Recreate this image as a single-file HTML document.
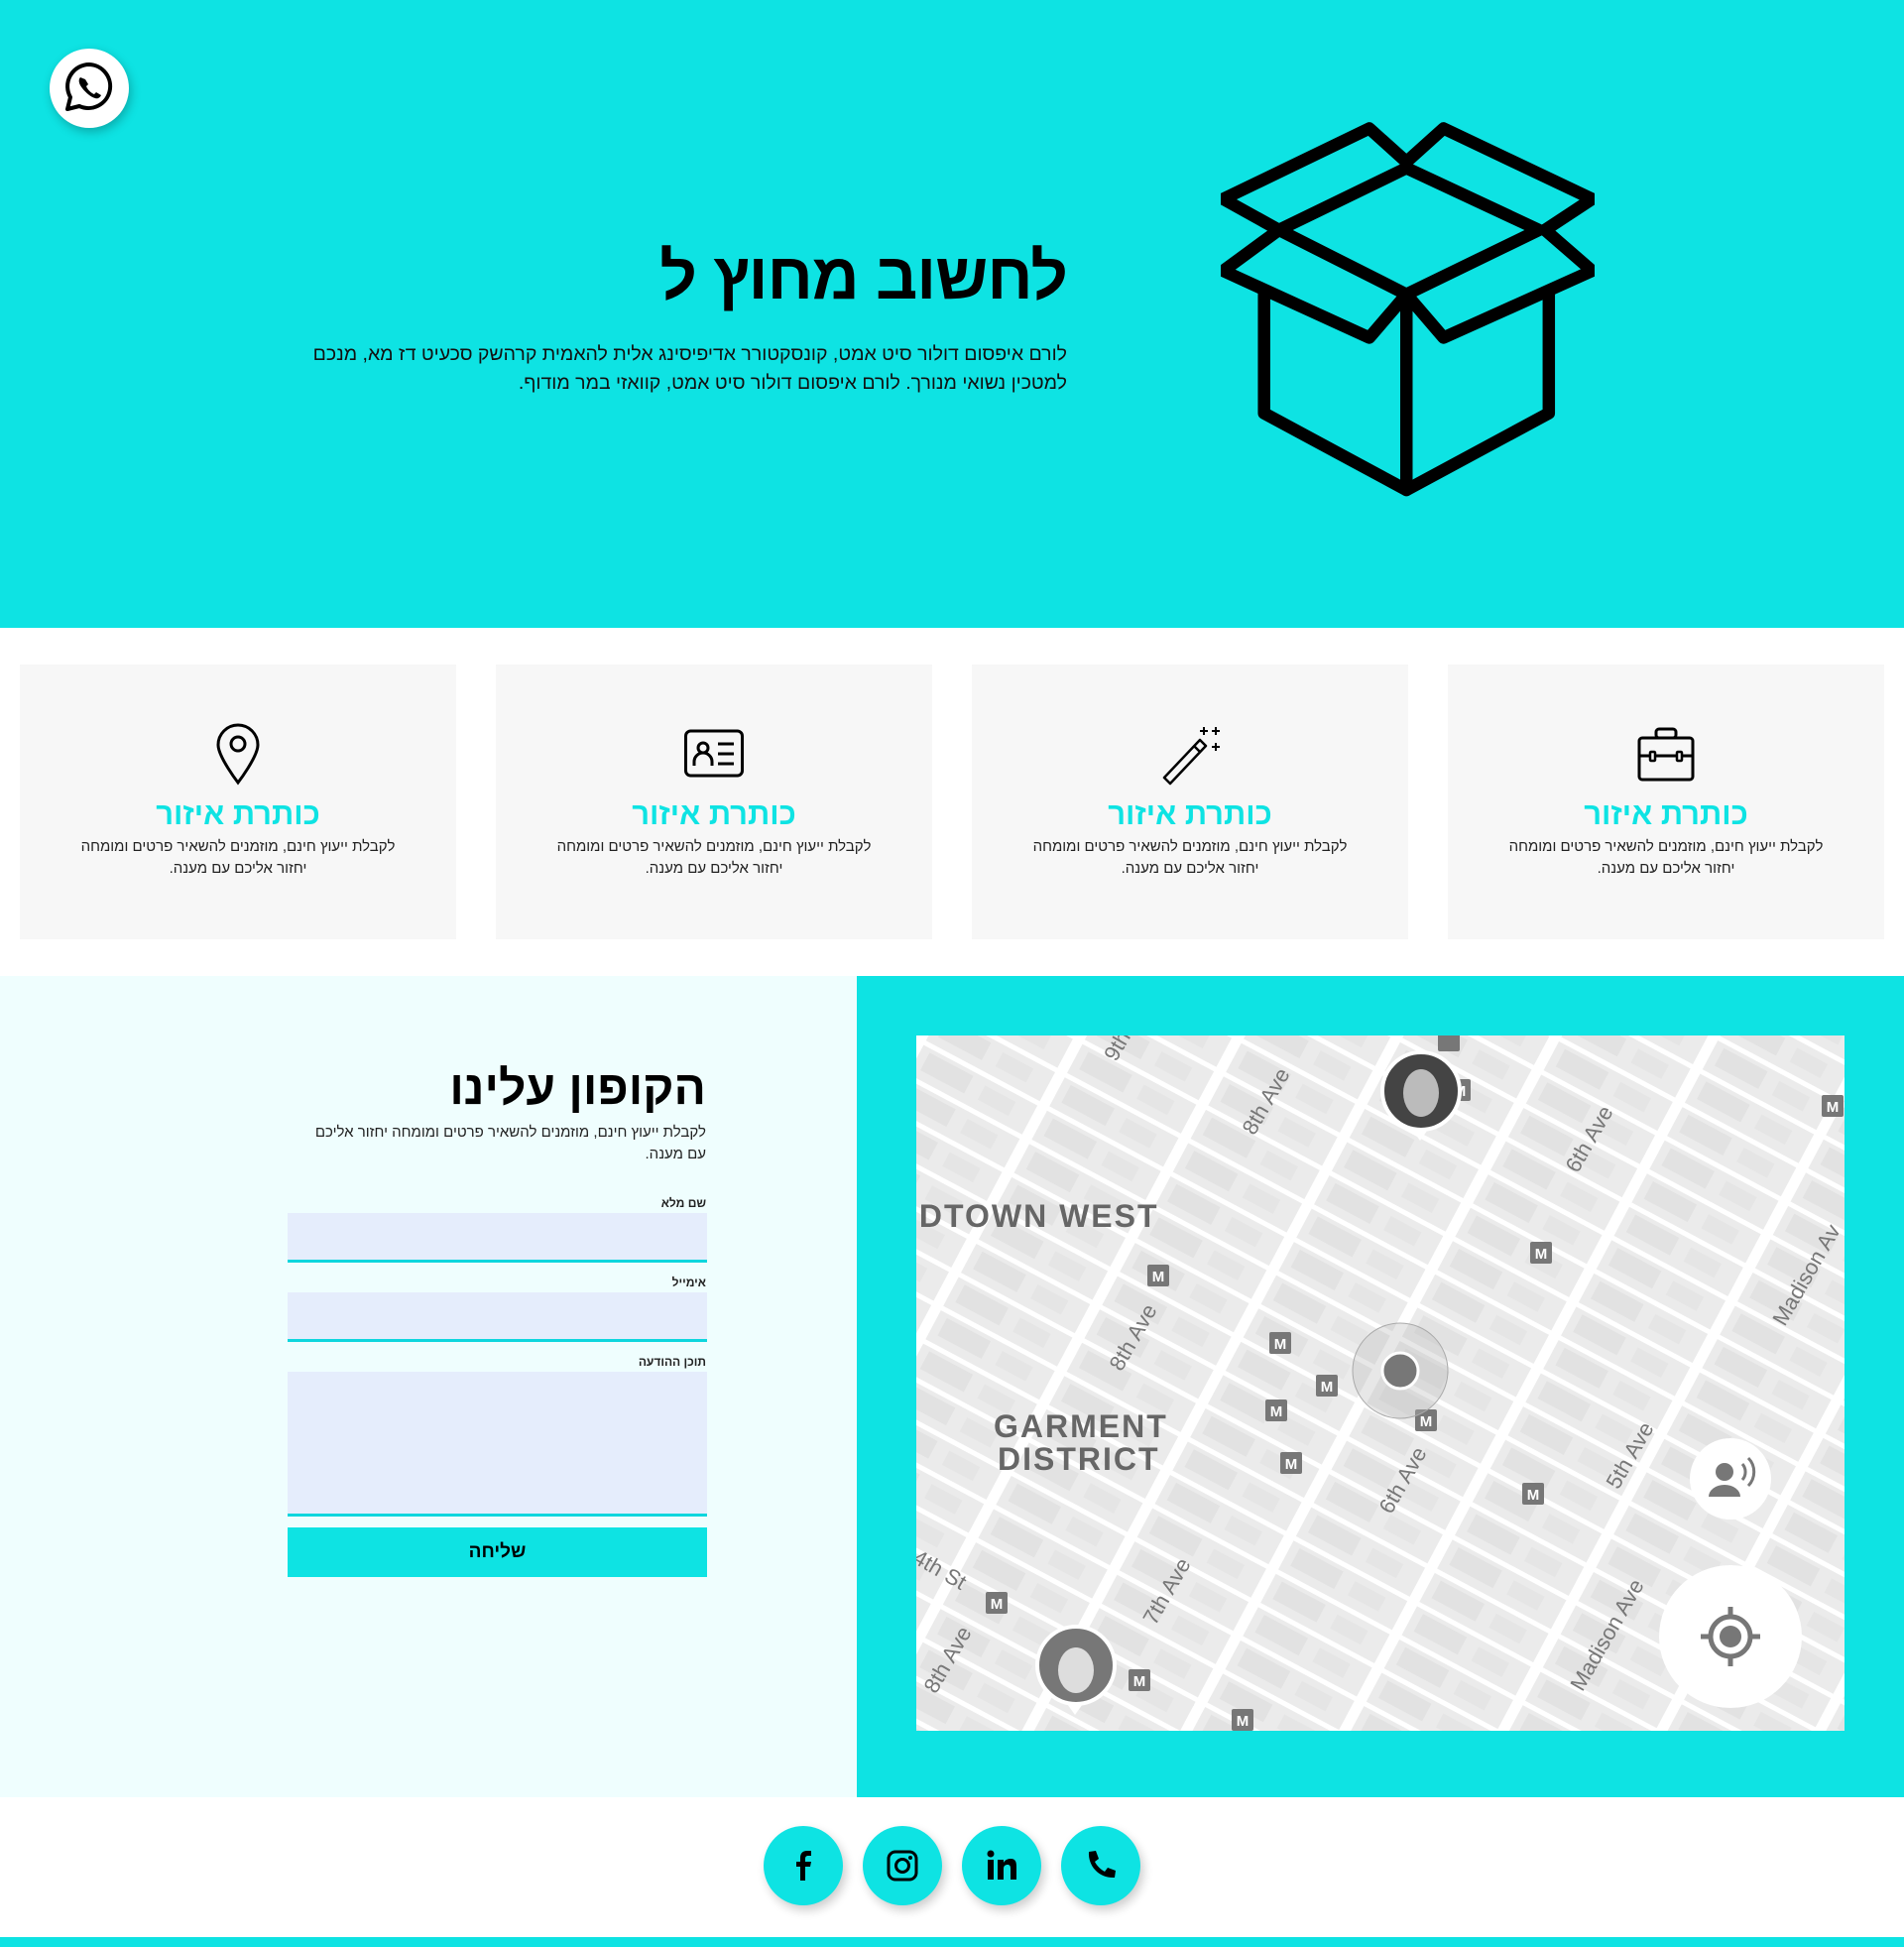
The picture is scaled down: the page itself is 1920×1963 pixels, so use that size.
<!DOCTYPE html>
<html lang="he" dir="rtl">
<head>
<meta charset="utf-8">
<style>
*{margin:0;padding:0;box-sizing:border-box}
body{width:1920px;height:1963px;position:relative;background:#fff;font-family:"Liberation Sans","DejaVu Sans",sans-serif;overflow:hidden}
.abs{position:absolute}
.hero{left:0;top:0;width:1920px;height:633px;background:#0ee3e3}
.wa{left:50px;top:49px;width:80px;height:80px;border-radius:50%;background:#fff;box-shadow:2px 4px 10px rgba(0,0,0,.25)}
h1{position:absolute;right:844px;top:240px;font-size:66px;font-weight:900;color:#000;white-space:nowrap;letter-spacing:-1px}
.hp{right:844px;top:343px;width:790px;font-size:19.5px;line-height:29px;color:#111;text-align:right}
.card{top:670px;width:440px;height:277px;background:#f7f7f7;text-align:center}
.card svg{position:absolute;left:190px;top:58px}
.card h3{position:absolute;left:0;right:0;top:133px;font-size:31px;font-weight:900;color:#0ee3e3}
.card p{position:absolute;left:60px;right:60px;top:173px;font-size:15px;line-height:22px;color:#222}
.sec{top:984px;height:828px}
.form h2{position:absolute;right:1208px;top:1070px;font-size:48px;font-weight:900;white-space:nowrap}
.sub{right:1208px;top:1131px;width:395px;font-size:15px;line-height:22px;color:#222;text-align:right}
.lbl{right:1208px;font-size:12px;font-weight:bold;color:#222}
.inp{left:290px;width:423px;background:#e5edfc;border-bottom:3px solid #0ed6dd}
.btn{left:290px;top:1540px;width:423px;height:50px;background:#0ee3e3;text-align:center;font-size:19px;font-weight:bold;line-height:50px}
.soc{top:1841px;width:80px;height:80px;border-radius:50%;background:#0ee3e3;box-shadow:3px 5px 10px rgba(0,0,0,.2)}
.soc svg{position:absolute;left:22px;top:22px}
.map{direction:ltr}
</style>
</head>
<body>
<div class="abs hero"></div>
<div class="abs wa">
<svg width="80" height="80" viewBox="0 0 80 80"><path d="M40 16a22 22 0 0 0-19 33l-3 12 12-3a22 22 0 1 0 10-42z" fill="none" stroke="#000" stroke-width="4" stroke-linejoin="round"/><path d="M31 29c-2 2-2 6 2 11s9 9 13 10c3 1 5-1 6-3l-5-3-2 2c-3-1-7-5-8-8l2-2-3-5z" fill="#000"/></svg>
</div>
<h1>לחשוב מחוץ ל</h1>
<div class="abs hp">לורם איפסום דולור סיט אמט, קונסקטורר אדיפיסינג אלית להאמית קרהשק סכעיט דז מא, מנכם למטכין נשואי מנורך. לורם איפסום דולור סיט אמט, קוואזי במר מודוף.</div>
<svg class="abs" style="left:1231px;top:123px" width="377" height="380" viewBox="983 98 302 304">
<g fill="none" stroke="#000" stroke-width="10" stroke-linejoin="round" stroke-linecap="round">
<path d="M1133 135 L1030 185 L1133 237 L1240 185 Z"/>
<path d="M1030 185 L985 160 L1103 103 L1133 130 L1163 103 L1283 160 L1245 185"/>
<path d="M1030 185 L985 218 L1103 272 L1133 237 L1163 272 L1283 218 L1245 185"/>
<path d="M1018 237 L1018 333 L1133 395 L1248 333 L1248 237"/>
<path d="M1133 237 L1133 395"/>
</g></svg>

<div class="abs card" style="left:20px">
<svg width="60" height="64" viewBox="0 0 60 64"><path d="M30 3c-11 0-20 9-20 20 0 12 20 38 20 38s20-26 20-38C50 12 41 3 30 3z" fill="none" stroke="#000" stroke-width="3"/><circle cx="30" cy="22" r="7" fill="none" stroke="#000" stroke-width="3"/></svg>
<h3>כותרת איזור</h3><p>לקבלת ייעוץ חינם, מוזמנים להשאיר פרטים ומומחה יחזור אליכם עם מענה.</p></div>
<div class="abs card" style="left:500px">
<svg width="60" height="64" viewBox="0 0 60 64"><rect x="1.5" y="9" width="57" height="45" rx="5" fill="none" stroke="#000" stroke-width="3"/><circle cx="19" cy="26" r="5" fill="none" stroke="#000" stroke-width="3"/><path d="M10 44v-4a9 9 0 0 1 18 0v4" fill="none" stroke="#000" stroke-width="3"/><path d="M34 22h16M34 32h16M34 42h16" stroke="#000" stroke-width="3"/></svg>
<h3>כותרת איזור</h3><p>לקבלת ייעוץ חינם, מוזמנים להשאיר פרטים ומומחה יחזור אליכם עם מענה.</p></div>
<div class="abs card" style="left:980px">
<svg width="60" height="64" viewBox="0 0 60 64"><path d="M40 18 L46 24 L10 62 L4 56 Z M34 24 L40 30" fill="none" stroke="#000" stroke-width="2.5" stroke-linejoin="round"/><path d="M44 5v8M40 9h8M56 5v8M52 9h8M56 21v8M52 25h8" stroke="#000" stroke-width="2"/></svg>
<h3>כותרת איזור</h3><p>לקבלת ייעוץ חינם, מוזמנים להשאיר פרטים ומומחה יחזור אליכם עם מענה.</p></div>
<div class="abs card" style="left:1460px">
<svg width="60" height="64" viewBox="0 0 60 64"><rect x="3" y="16" width="54" height="42" rx="3" fill="none" stroke="#000" stroke-width="3"/><rect x="20" y="7" width="20" height="9" rx="3" fill="none" stroke="#000" stroke-width="3"/><path d="M3 34h54" stroke="#000" stroke-width="3"/><rect x="14" y="30" width="5" height="9" rx="1" fill="#f7f7f7" stroke="#000" stroke-width="2.5"/><rect x="41" y="30" width="5" height="9" rx="1" fill="#f7f7f7" stroke="#000" stroke-width="2.5"/></svg>
<h3>כותרת איזור</h3><p>לקבלת ייעוץ חינם, מוזמנים להשאיר פרטים ומומחה יחזור אליכם עם מענה.</p></div>

<div class="abs sec" style="left:0;width:864px;background:#effefe"></div>
<div class="abs sec" style="left:864px;width:1056px;background:#0ee3e3"></div>

<div class="form">
<h2>הקופון עלינו</h2>
<div class="abs sub">לקבלת ייעוץ חינם, מוזמנים להשאיר פרטים ומומחה יחזור אליכם עם מענה.</div>
<div class="abs lbl" style="top:1206px">שם מלא</div>
<div class="abs inp" style="top:1223px;height:50px"></div>
<div class="abs lbl" style="top:1286px">אימייל</div>
<div class="abs inp" style="top:1303px;height:50px"></div>
<div class="abs lbl" style="top:1366px">תוכן ההודעה</div>
<div class="abs inp" style="top:1383px;height:146px"></div>
<div class="abs btn">שליחה</div>
</div>

<svg class="abs map" style="left:924px;top:1044px" width="936" height="701" viewBox="0 0 936 701" direction="ltr">
<defs>
<pattern id="g" width="141" height="38" patternUnits="userSpaceOnUse" patternTransform="rotate(28)">
<rect width="141" height="38" fill="#ebebeb"/>
<rect x="20" y="9" width="50" height="20" fill="#e2e2e2"/>
<rect x="85" y="12" width="35" height="16" fill="#e5e5e5"/>
<rect x="0" y="0" width="141" height="5" fill="#fff"/>
<rect x="0" y="0" width="11" height="38" fill="#fff"/>
</pattern>
</defs>
<rect width="936" height="701" fill="url(#g)"/>
<g font-family="Liberation Sans, sans-serif" font-weight="bold" fill="#666" letter-spacing="2" text-anchor="start">
<text x="-8" y="193" font-size="32">IDTOWN WEST</text>
<text x="78" y="405" font-size="32">GARMENT</text>
<text x="82" y="438" font-size="32">DISTRICT</text>
</g>
<g font-family="Liberation Sans, sans-serif" font-size="22" fill="#777" text-anchor="middle">
<text transform="translate(359,70) rotate(-60)">8th Ave</text>
<text transform="translate(225,308) rotate(-60)">8th Ave</text>
<text transform="translate(685,108) rotate(-60)">6th Ave</text>
<text transform="translate(497,452) rotate(-60)">6th Ave</text>
<text transform="translate(259,564) rotate(-60)">7th Ave</text>
<text transform="translate(726,427) rotate(-60)">5th Ave</text>
<text transform="translate(703,608) rotate(-60)">Madison Ave</text>
<text transform="translate(904,245) rotate(-60)">Madison Av</text>
<text transform="translate(38,633) rotate(-60)">8th Ave</text>
<text transform="translate(209,14) rotate(-60)">9th</text>
<text transform="translate(20,545) rotate(30)">4th St</text>
</g>
<g font-family="Liberation Sans, sans-serif" font-size="15" font-weight="bold" fill="#fff" text-anchor="middle">
<g fill="#777">
<rect x="526" y="-6" width="22" height="22" rx="2"/><rect x="537" y="44" width="22" height="22" rx="2"/><rect x="913" y="60" width="22" height="22" rx="2"/><rect x="619" y="208" width="22" height="22" rx="2"/><rect x="233" y="231" width="22" height="22" rx="2"/><rect x="356" y="299" width="22" height="22" rx="2"/><rect x="403" y="342" width="22" height="22" rx="2"/><rect x="352" y="367" width="22" height="22" rx="2"/><rect x="503" y="377" width="22" height="22" rx="2"/><rect x="367" y="420" width="22" height="22" rx="2"/><rect x="611" y="451" width="22" height="22" rx="2"/><rect x="70" y="561" width="22" height="22" rx="2"/><rect x="214" y="639" width="22" height="22" rx="2"/><rect x="318" y="679" width="22" height="22" rx="2"/>
</g>
<text x="548" y="61">M</text><text x="924" y="77">M</text><text x="630" y="225">M</text><text x="244" y="248">M</text><text x="367" y="316">M</text><text x="414" y="359">M</text><text x="363" y="384">M</text><text x="514" y="394">M</text><text x="378" y="437">M</text><text x="622" y="468">M</text><text x="81" y="578">M</text><text x="225" y="656">M</text><text x="329" y="696">M</text>
</g>
<circle cx="488" cy="338" r="48" fill="#bbb" fill-opacity=".35" stroke="#aaa"/>
<circle cx="488" cy="338" r="18" fill="#777" stroke="#fff" stroke-width="3"/>
<path d="M498 92 l10 14 l10 -14z" fill="#fff"/>
<circle cx="509" cy="56" r="39" fill="#444" stroke="#fff" stroke-width="4"/>
<ellipse cx="509" cy="58" rx="18" ry="24" fill="#bbb"/>
<path d="M150 671 l10 14 l10 -14z" fill="#fff"/>
<circle cx="161" cy="635" r="39" fill="#777" stroke="#fff" stroke-width="4"/>
<ellipse cx="161" cy="640" rx="18" ry="23" fill="#ddd"/>
<circle cx="821" cy="447" r="41" fill="#fff"/>
<circle cx="815" cy="440" r="9" fill="#777"/><path d="M799 465a16 12 0 0 1 32 0z" fill="#777"/>
<path d="M833 432a12 12 0 0 1 0 16M839 426a20 20 0 0 1 0 28" fill="none" stroke="#777" stroke-width="3"/>
<circle cx="821" cy="606" r="72" fill="#fff"/>
<circle cx="821" cy="606" r="20" fill="none" stroke="#777" stroke-width="5"/><circle cx="821" cy="606" r="11" fill="#777"/>
<path d="M821 576v12M821 624v12M791 606h12M839 606h12" stroke="#777" stroke-width="5"/>
</svg>

<div class="abs soc" style="left:770px"><svg width="36" height="36" viewBox="0 0 36 36"><path d="M20 33V19h5l1-5h-6v-3c0-2 1-3 3-3h3V3h-4c-5 0-7 3-7 7v4h-4v5h4v14z" fill="#000"/></svg></div>
<div class="abs soc" style="left:870px"><svg width="36" height="36" viewBox="0 0 36 36"><rect x="4" y="4" width="28" height="28" rx="7" fill="none" stroke="#000" stroke-width="3"/><circle cx="18" cy="18" r="6.5" fill="none" stroke="#000" stroke-width="3"/><circle cx="26" cy="10" r="2" fill="#000"/></svg></div>
<div class="abs soc" style="left:970px"><svg width="36" height="36" viewBox="0 0 36 36"><rect x="4" y="12" width="6" height="20" fill="#000"/><circle cx="7" cy="6" r="3.5" fill="#000"/><path d="M14 12h6v3c1-2 3-4 7-4 5 0 6 3 6 8v13h-6V21c0-3-1-4-3-4s-4 1-4 4v11h-6z" fill="#000"/></svg></div>
<div class="abs soc" style="left:1070px"><svg width="36" height="36" viewBox="0 0 36 36"><path d="M6 4l7-1 3 8-4 3c2 4 6 8 10 10l3-4 8 3-1 7c-15 1-27-11-26-26z" fill="#000"/></svg></div>
<div class="abs" style="left:0;top:1953px;width:1920px;height:10px;background:#0ee3e3"></div>
</body>
</html>
